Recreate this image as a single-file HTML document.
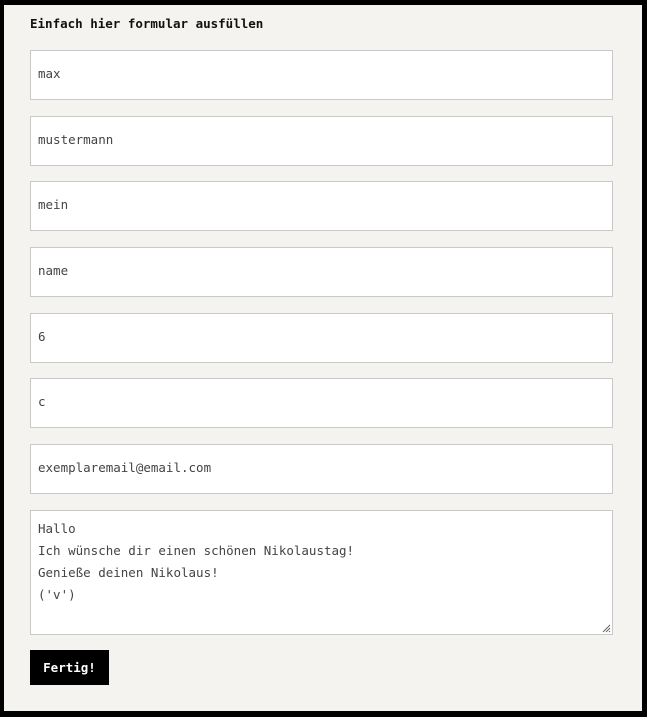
<!DOCTYPE html>
<html><head><style>
html,body{margin:0;padding:0;}
body{width:647px;height:717px;background:#000;position:relative;overflow:hidden;font-family:"DejaVu Sans Mono","Liberation Mono",monospace;}
.page{position:absolute;left:4px;top:5px;width:638px;height:706px;background:#f4f3ef;}
.t{position:absolute;left:26px;top:10px;font-size:12.5px;font-weight:bold;color:#111;line-height:18px;}
.f{position:absolute;left:26px;width:581px;height:48px;background:#fff;border:1px solid #c9c9c9;box-sizing:content-box;}
.f span{position:absolute;left:7px;top:15px;font-size:12.5px;color:#444;line-height:16px;}
.ta{position:absolute;left:26px;top:505px;width:581px;height:123px;background:#fff;border:1px solid #c9c9c9;}
.ta div{position:absolute;left:7px;top:7px;font-size:12.5px;color:#444;line-height:22px;white-space:pre;}
.b{position:absolute;left:26px;top:645px;width:79px;height:35px;background:#000;color:#fff;font-size:12.5px;font-weight:bold;line-height:35px;text-align:center;}
</style></head><body>
<div class="page">
<div class="t">Einfach hier formular ausfüllen</div>
<div class="f" style="top:45px"><span>max</span></div>
<div class="f" style="top:111px"><span>mustermann</span></div>
<div class="f" style="top:176px"><span>mein</span></div>
<div class="f" style="top:242px"><span>name</span></div>
<div class="f" style="top:308px"><span>6</span></div>
<div class="f" style="top:373px"><span>c</span></div>
<div class="f" style="top:439px"><span>exemplaremail@email.com</span></div>
<div class="ta"><div>Hallo
Ich wünsche dir einen schönen Nikolaustag!
Genieße deinen Nikolaus!
('v')</div>
<svg style="position:absolute;right:1px;bottom:1px" width="10" height="10"><path d="M9 2L2 9M9 5L5 9M9 8L8 9" stroke="#666" stroke-width="1"/></svg></div>
<div class="b">Fertig!</div>
</div>
</body></html>
